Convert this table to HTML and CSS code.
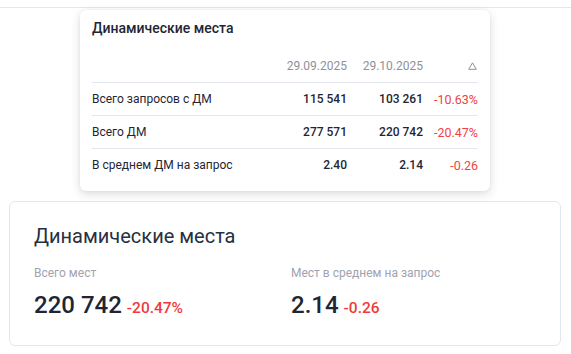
FILE: index.html
```html
<!DOCTYPE html>
<html lang="ru">
<head>
<meta charset="utf-8">
<title>Динамические места</title>
<link rel="stylesheet" href="styles.css">
</head>
<body>
<div class="topbar"></div>
<main class="page">
  <section class="card">
    <h2 class="card-title">Динамические места</h2>
    <div class="stats">
      <div class="stat">
        <div class="stat-label">Всего мест</div>
        <div class="stat-value"><span class="num">220 742</span><span class="diff">-20.47%</span></div>
      </div>
      <div class="stat">
        <div class="stat-label">Мест в среднем на запрос</div>
        <div class="stat-value"><span class="num">2.14</span><span class="diff">-0.26</span></div>
      </div>
    </div>
  </section>

  <div class="tooltip">
    <div class="tt-title">Динамические места</div>
    <div class="tt-table">
      <div class="tt-row tt-head">
        <span></span>
        <span class="c">29.09.2025</span>
        <span class="c">29.10.2025</span>
        <span class="c delta"><svg width="9" height="8" viewBox="0 0 9 8"><path d="M4.5 0.8 L8.3 7.3 L0.7 7.3 Z" fill="none" stroke="#8e9199" stroke-width="1"/></svg></span>
      </div>
      <div class="tt-row">
        <span class="lbl">Всего запросов с ДМ</span>
        <span class="c v">115 541</span>
        <span class="c v">103 261</span>
        <span class="c neg">-10.63%</span>
      </div>
      <div class="tt-row">
        <span class="lbl">Всего ДМ</span>
        <span class="c v">277 571</span>
        <span class="c v">220 742</span>
        <span class="c neg">-20.47%</span>
      </div>
      <div class="tt-row last">
        <span class="lbl">В среднем ДМ на запрос</span>
        <span class="c v">2.40</span>
        <span class="c v">2.14</span>
        <span class="c neg">-0.26</span>
      </div>
    </div>
  </div>
</main>
</body>
</html>
```

FILE: styles.css
```css
* { box-sizing: border-box; }
html, body { margin: 0; padding: 0; background: #fff; }
body {
  font-family: Roboto, "Noto Sans", sans-serif;
  color: #1f2937;
  width: 571px;
  height: 354px;
  overflow: hidden;
}
.topbar {
  height: 8px;
  border-bottom: 1px solid #e4e7ec;
}
.page {
  position: relative;
  padding: 193px 10px 0 9px;
}
.card {
  border: 1px solid #e2e7ef;
  border-radius: 6px;
  padding: 22px 24px 24px;
  height: 145px;
}
.card-title {
  margin: 0;
  font-size: 20px;
  line-height: 24px;
  font-weight: 400;
  color: #27303f;
}
.stats {
  display: grid;
  grid-template-columns: 1fr 1fr;
  column-gap: 12px;
  margin-top: 17px;
}
.stat-label {
  font-size: 12px;
  line-height: 16px;
  color: #9ea3ae;
}
.stat-value {
  margin-top: 8px;
  display: flex;
  align-items: baseline;
  gap: 5px;
  line-height: 32px;
}
.num {
  font-size: 24px;
  font-weight: 500;
  color: #1e2634;
}
.diff {
  font-size: 15.5px;
  font-weight: 500;
  color: #f03a3a;
}
.tooltip {
  position: absolute;
  left: 80px;
  top: 2px;
  width: 410px;
  background: #fff;
  border-radius: 6px;
  box-shadow: 0 3px 10px rgba(30, 40, 60, 0.16), 0 0 2px rgba(30, 40, 60, 0.08);
  padding: 8px 12px 10px;
}
.tt-title {
  font-size: 14px;
  line-height: 20px;
  font-weight: 500;
  color: #1f2633;
  margin-bottom: 12px;
}
.tt-row {
  display: grid;
  grid-template-columns: 1fr 76px 76px 55px;
  align-items: center;
  height: 33px;
  border-bottom: 1px solid #e3e6ee;
  font-size: 12px;
}
.tt-row.last { border-bottom: none; height: 32px; }
.tt-head { font-size: 12px; color: #8e9199; }
.c { text-align: right; }
.delta { display: flex; justify-content: flex-end; padding-right: 1px; }
.lbl { color: #1f2633; font-size: 12px; }
.v { font-weight: 500; color: #1f2633; font-size: 12px; }
.neg { color: #f04343; font-size: 12.5px; }
```
